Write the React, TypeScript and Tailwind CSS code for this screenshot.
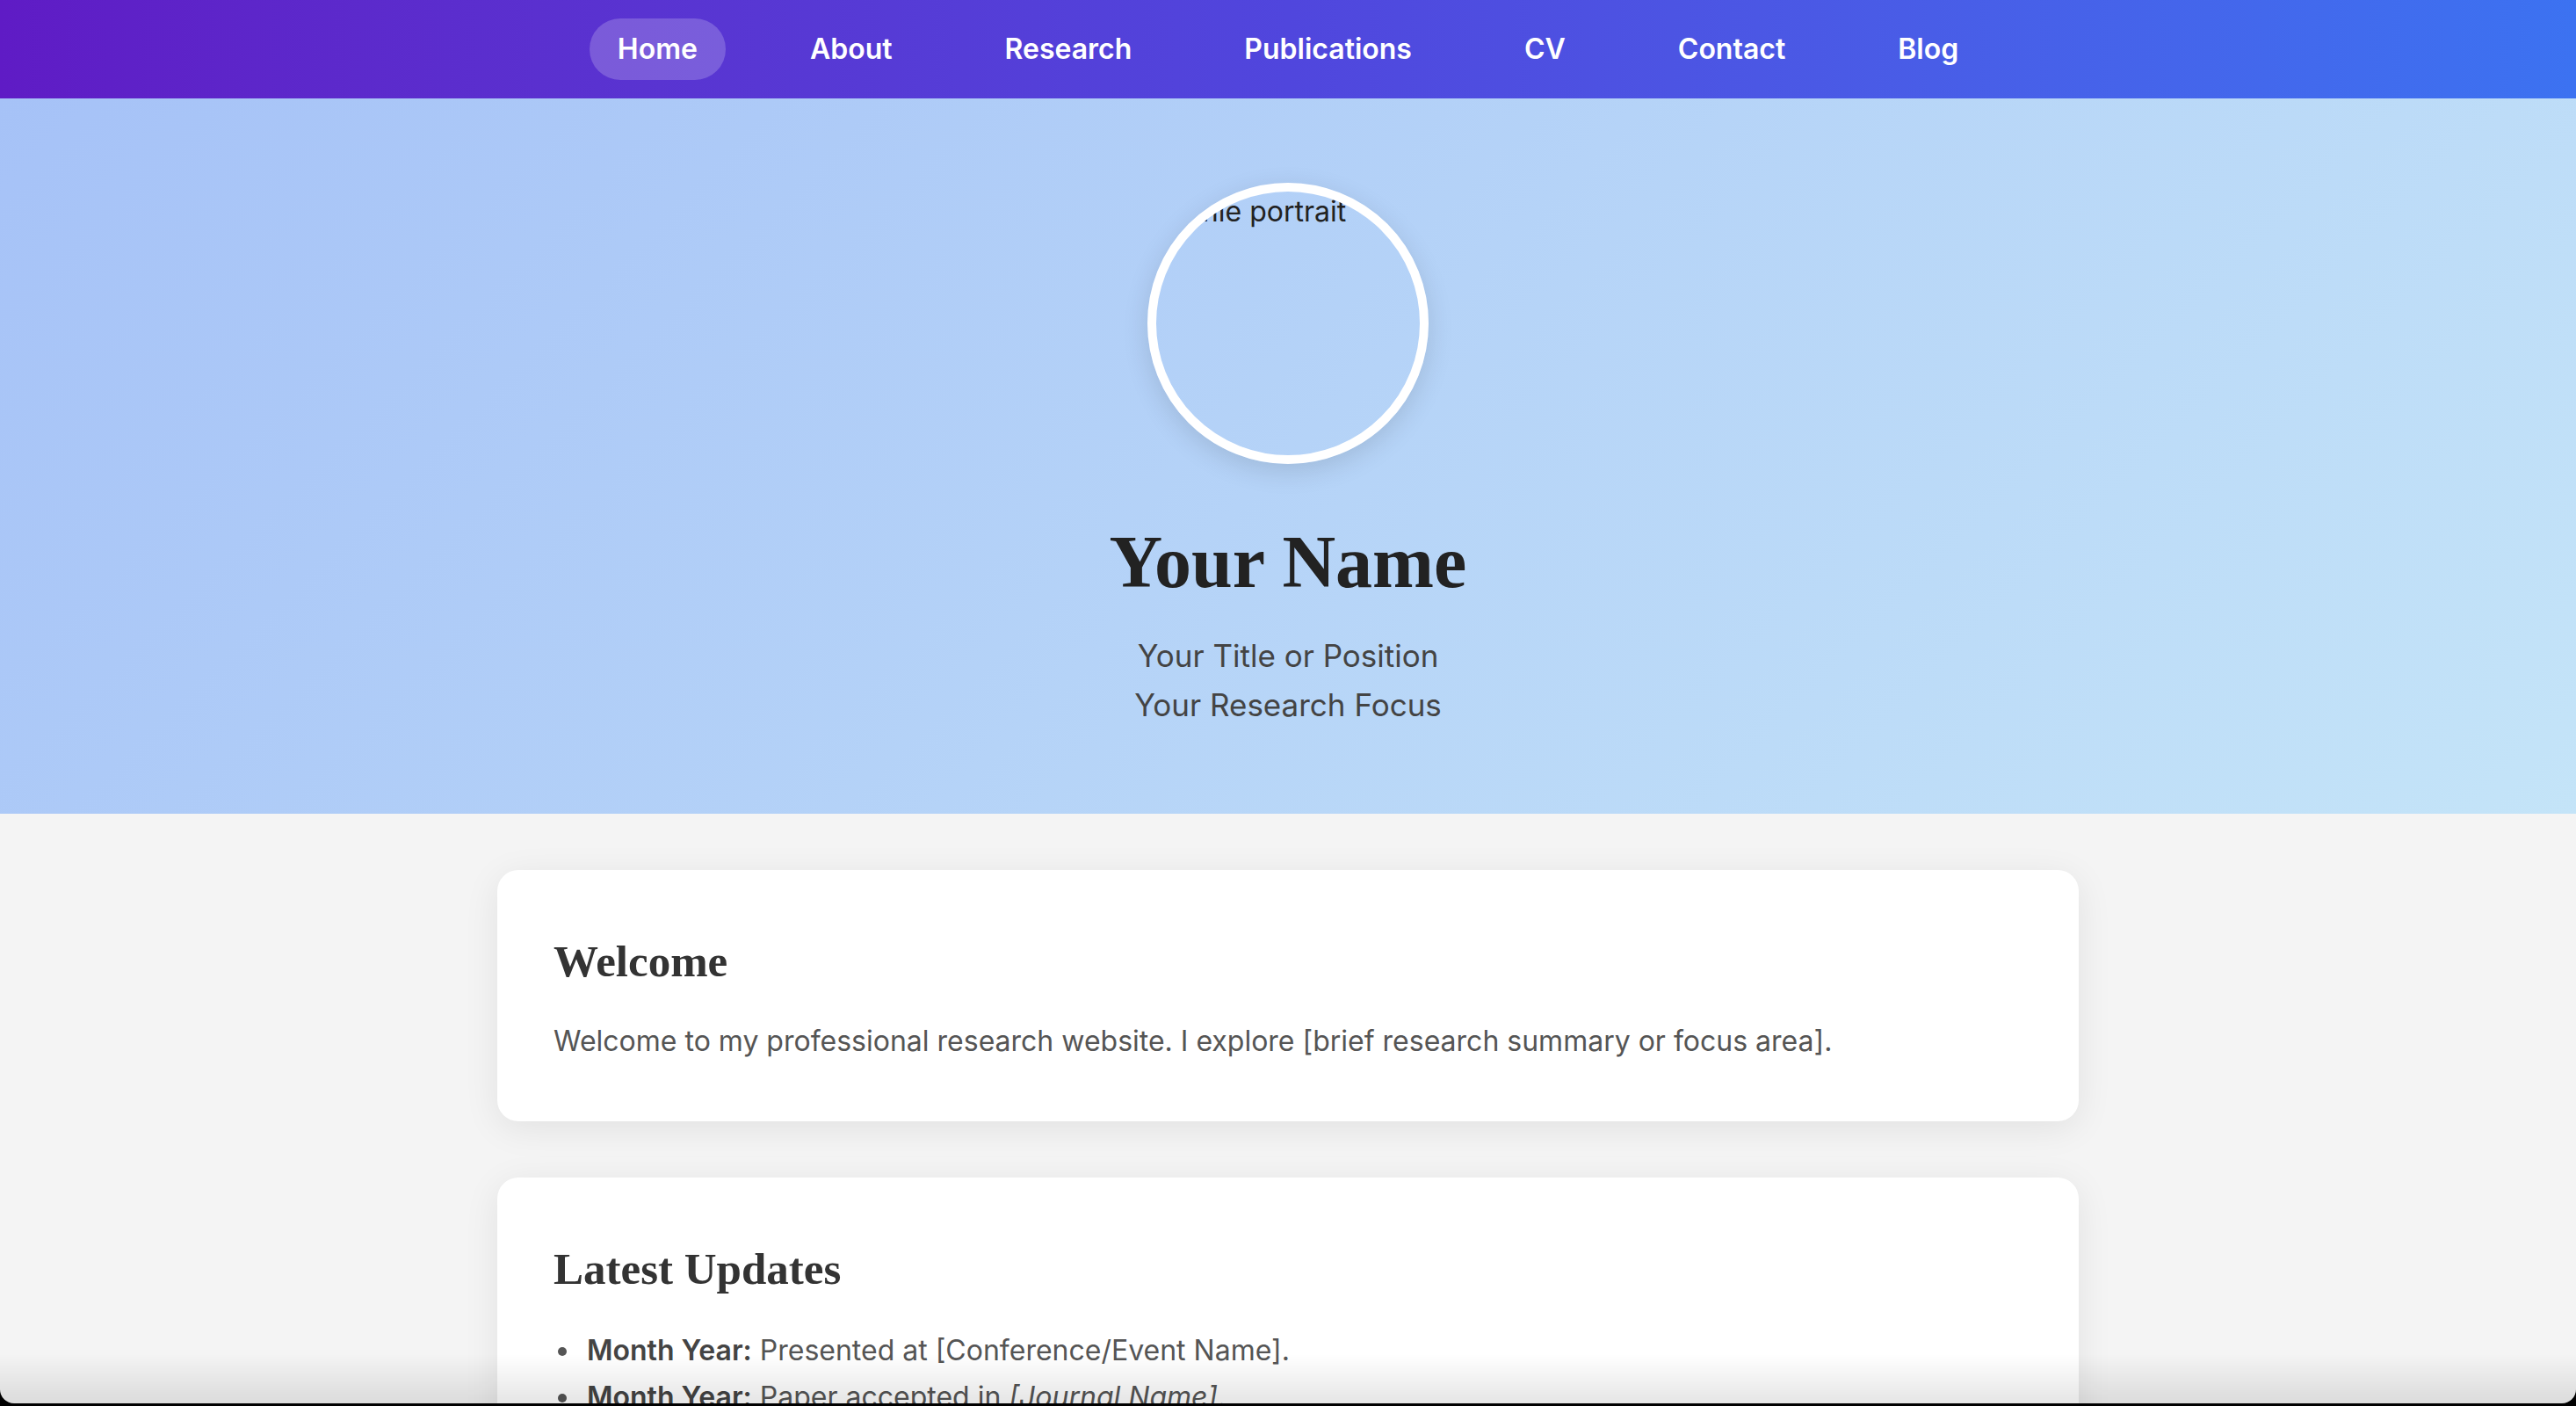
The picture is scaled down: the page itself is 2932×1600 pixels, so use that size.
import React from "react";

const navItems = ["Home", "About", "Research", "Publications", "CV", "Contact", "Blog"];

export default function App() {
  return (
    <div className="min-h-screen bg-[#f4f4f4] font-['Inter',sans-serif]">
      <nav className="h-[112px] bg-gradient-to-r from-[#5f1bc5] via-[#5046dd] to-[#3c72f1] flex items-center justify-center gap-[64px]">
        {navItems.map((item, i) => (
          <a
            key={item}
            className={
              i === 0
                ? "px-[32px] py-[16px] rounded-full bg-white/20 text-white text-[32px] leading-[38px] font-semibold"
                : "px-[32px] py-[16px] rounded-full text-white text-[32px] leading-[38px] font-semibold"
            }
          >
            {item}
          </a>
        ))}
      </nav>

      <header className="bg-[linear-gradient(135deg,#a6c2f7_0%,#c4e4f8_100%)] pt-[96px] pb-[96px] flex flex-col items-center text-center">
        <div className="w-[320px] h-[320px] rounded-full border-[10px] border-white overflow-hidden shadow-[0_8px_30px_rgba(0,0,0,0.12)]">
          <span className="block text-left whitespace-nowrap text-[32px] leading-[46px] text-[#222]">
            Profile portrait
          </span>
        </div>
        <h1 className="mt-[64px] mb-[30px] font-['Liberation_Serif',serif] font-bold text-[84px] leading-[96px] text-[#222]">
          Your Name
        </h1>
        <p className="text-[35px] leading-[56px] text-[#444]">Your Title or Position</p>
        <p className="text-[35px] leading-[56px] text-[#444]">Your Research Focus</p>
      </header>

      <main className="max-w-[1800px] mx-auto pt-[64px] pb-[64px] flex flex-col gap-[64px]">
        <section className="bg-white rounded-[24px] p-[64px] shadow-[0_8px_40px_rgba(0,0,0,0.08)]">
          <h2 className="font-['Liberation_Serif',serif] font-bold text-[51px] leading-[80px] text-[#333]">
            Welcome
          </h2>
          <p className="mt-[24px] text-[32px] leading-[54px] text-[#555]">
            Welcome to my professional research website. I explore [brief research summary or focus area].
          </p>
        </section>

        <section className="bg-white rounded-[24px] p-[64px] shadow-[0_8px_40px_rgba(0,0,0,0.08)]">
          <h2 className="font-['Liberation_Serif',serif] font-bold text-[51px] leading-[80px] text-[#333]">
            Latest Updates
          </h2>
          <ul className="mt-[26px] pl-[32px] list-disc marker:text-[#555] text-[32px] leading-[53px] text-[#555]">
            <li className="pl-[6px]">
              <strong className="font-semibold text-[#444]">Month Year:</strong> Presented at [Conference/Event Name].
            </li>
            <li className="pl-[6px]">
              <strong className="font-semibold text-[#444]">Month Year:</strong> Paper accepted in{" "}
              <em>[Journal Name]</em>.
            </li>
          </ul>
        </section>
      </main>

      <div className="pointer-events-none fixed left-0 right-0 bottom-[3px] h-[56px] bg-gradient-to-b from-transparent to-black/[0.1]" />
      <div className="pointer-events-none fixed top-0 left-0 right-0 bottom-[3px] rounded-b-[16px] shadow-[0_0_0_24px_#000]" />
    </div>
  );
}
